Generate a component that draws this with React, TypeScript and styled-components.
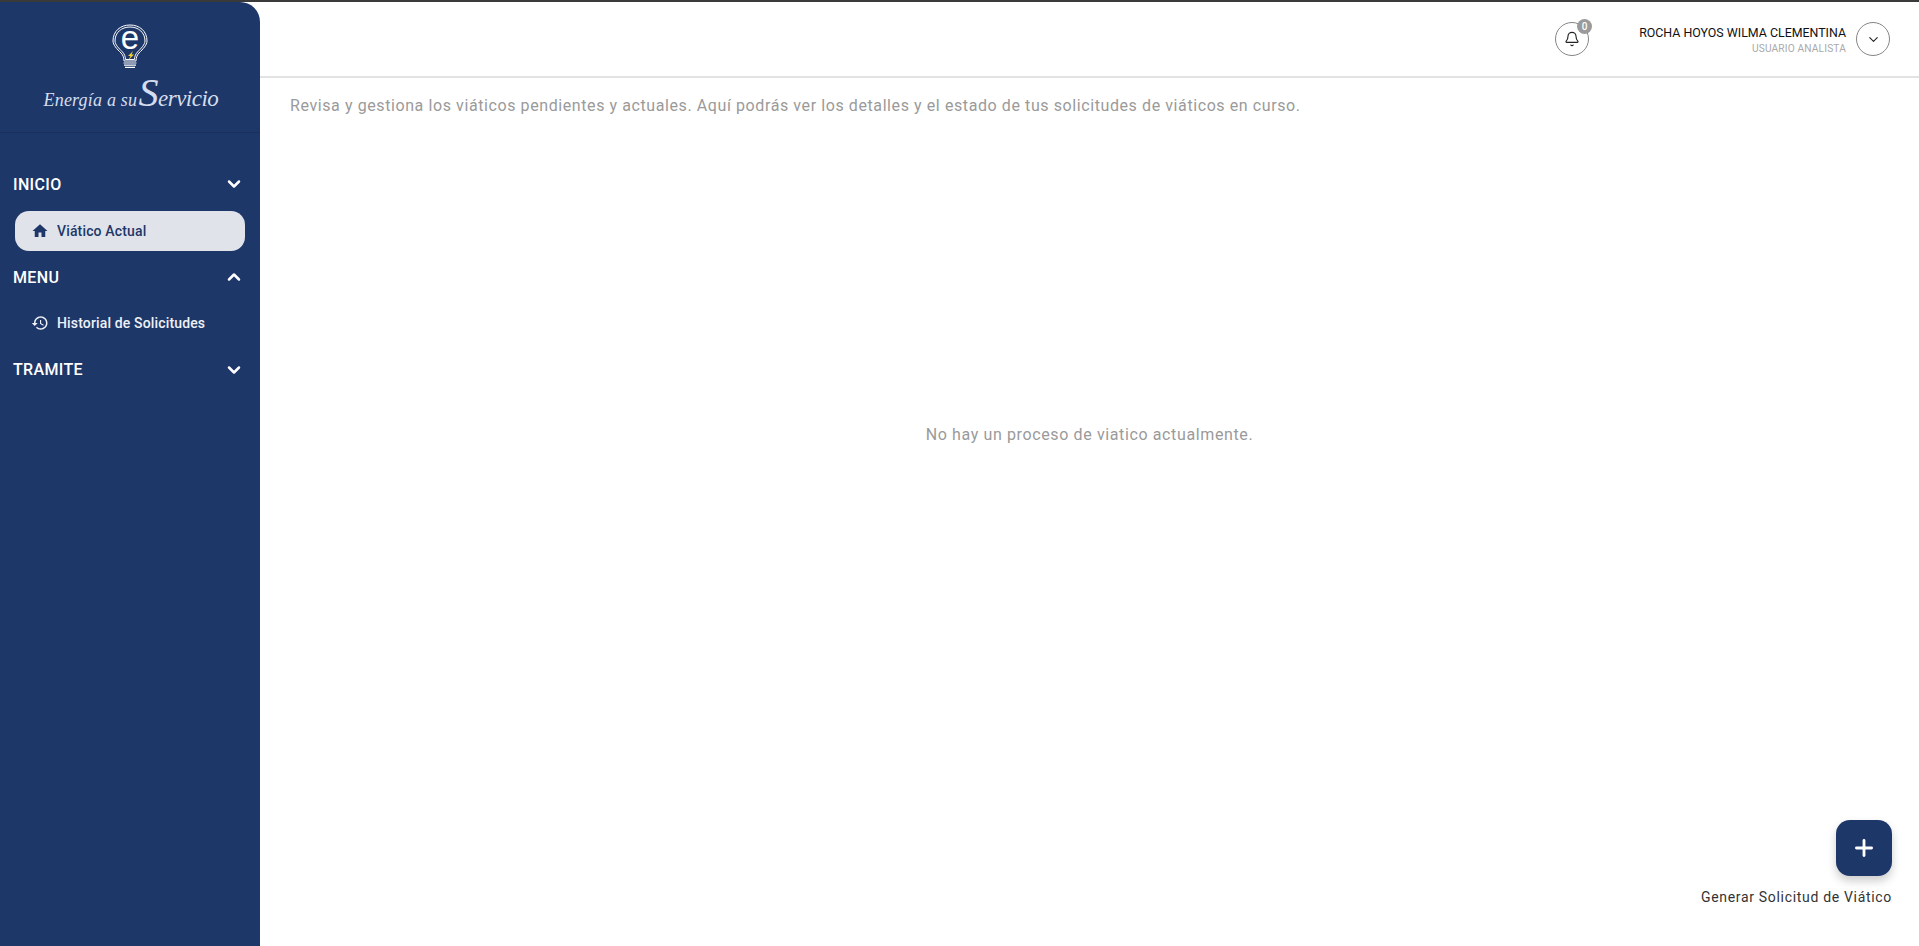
import React from 'react'
import styled, { createGlobalStyle } from 'styled-components'
import { Bell, ChevronDown, ChevronUp, Plus } from 'lucide-react'

const GlobalStyle = createGlobalStyle`
  html, body {
    margin: 0;
    height: 100%;
    background: #fff;
    font-family: Roboto, "Liberation Sans", sans-serif;
  }
  #root {
    height: 100%;
  }
`

const Page = styled.div`
  height: 100vh;
  display: flex;
  flex-direction: column;
  overflow: hidden;
`

const TopLine = styled.div`
  height: 2px;
  flex: none;
  background: #3a3a3a;
`

const Body = styled.div`
  flex: 1;
  min-height: 0;
  display: flex;
`

const Sidebar = styled.aside`
  width: 260px;
  flex: none;
  background: #1e3769;
  border-top-right-radius: 20px;
  color: #fff;
`

const Brand = styled.div`
  height: 131px;
  box-sizing: border-box;
  padding-top: 12px;
  display: flex;
  flex-direction: column;
  align-items: center;
  border-bottom: 1px solid #1a3160;
`

const Tagline = styled.div`
  display: flex;
  align-items: baseline;
  margin-top: 1px;
  font-family: "Liberation Serif", serif;
  font-style: italic;
  color: #d5deee;
  white-space: nowrap;
  line-height: 44px;
`

const TaglineSmall = styled.span`
  font-size: 18px;
  width: 95px;
  letter-spacing: 0.2px;
`

const TaglineBig = styled.span`
  display: inline-block;
  font-size: 23px;
  width: 78px;
  letter-spacing: -0.5px;

  &::first-letter {
    font-size: 40px;
  }
`

const Nav = styled.nav`
  padding: 28.300px 16px 0 13px;
  display: flex;
  flex-direction: column;
`

const Section = styled.div`
  height: 46.300px;
  display: flex;
  align-items: center;
  justify-content: space-between;
  font-size: 16px;
  font-weight: 500;
  letter-spacing: 0.35px;
`

const SectionToggle = styled.span`
  display: flex;
`

const Item = styled.div<{ $active?: boolean }>`
  height: 46.300px;
  display: flex;
  align-items: center;
  position: relative;
  z-index: 0;
  margin: 0 -1px 0 2px;
  padding-left: 16px;
  gap: 8px;
  font-size: 14px;
  font-weight: 500;
  letter-spacing: 0.15px;
  color: ${(p) => (p.$active ? '#1e3769' : '#eef1f6')};

  &::before {
    content: '';
    display: ${(p) => (p.$active ? 'block' : 'none')};
    position: absolute;
    z-index: -1;
    left: 0;
    right: 0;
    top: 3px;
    bottom: 3px;
    border-radius: 14px;
    background: #e0e4ea;
  }
`

const ItemIcon = styled.svg`
  width: 18px;
  height: 18px;
  flex: none;
  fill: currentColor;
`

const Main = styled.main`
  flex: 1;
  min-width: 0;
  display: flex;
  flex-direction: column;
`

const Header = styled.header`
  height: 76px;
  flex: none;
  box-sizing: border-box;
  border-bottom: 2px solid #e2e2e2;
  padding-right: 29px;
  display: flex;
  align-items: center;
  justify-content: flex-end;
`

const RoundButton = styled.div`
  position: relative;
  width: 34px;
  height: 34px;
  box-sizing: border-box;
  border: 1px solid #858585;
  border-radius: 50%;
  display: flex;
  align-items: center;
  justify-content: center;
  color: #222;
`

const Badge = styled.span`
  position: absolute;
  top: -4px;
  right: -4px;
  width: 15px;
  height: 15px;
  border-radius: 50%;
  background: #9a9a9a;
  color: #fff;
  font-size: 10px;
  font-weight: 500;
  line-height: 15px;
  text-align: center;
`

const UserBox = styled.div`
  margin-left: 50px;
  margin-right: 10px;
  padding-top: 2px;
  text-align: right;
`

const UserName = styled.div`
  font-size: 12.400px;
  line-height: 16px;
  color: #111;
`

const UserRole = styled.div`
  font-size: 10.200px;
  line-height: 15px;
  letter-spacing: 0.15px;
  color: #aaa;
`

const Intro = styled.p`
  margin: 17px 0 0 30px;
  font-size: 16px;
  line-height: 22px;
  letter-spacing: 0.59px;
  color: #9a9a9a;
`

const Empty = styled.div`
  margin-top: 307px;
  text-align: center;
  font-size: 16px;
  line-height: 22px;
  letter-spacing: 0.62px;
  color: #9a9a9a;
`

const Actions = styled.div`
  margin-top: auto;
  padding: 0 27px 39px 0;
  display: flex;
  flex-direction: column;
  align-items: flex-end;
  gap: 11px;
`

const Fab = styled.div`
  width: 56px;
  height: 56px;
  border-radius: 14px;
  background: #1e3769;
  color: #fff;
  display: flex;
  align-items: center;
  justify-content: center;
  box-shadow: 0 5px 10px rgba(0, 0, 0, 0.2);
`

const FabLabel = styled.div`
  font-size: 14px;
  line-height: 20px;
  letter-spacing: 0.68px;
  color: #333;
`

function BulbLogo() {
  return (
    <svg width="36" height="56" viewBox="0 -10 36 56" fill="none">
      <path
        d="M9 29C5 25 1 21 1 17C1 7 8.500 1 18 1C27.500 1 35 7 35 17C35 21 31 25 27 29C25 31 24 34 24 37H12C12 34 11 31 9 29Z"
        stroke="#fff"
        strokeWidth="1"
      />
      <path
        d="M10.500 28C7 24.500 3 20.500 3 17C3 8.500 9.500 3 18 3C26.500 3 33 8.500 33 17C33 20.500 29 24.500 25.500 28C23.500 30 22.500 33 22.500 35.500H13.500C13.500 33 12.500 30 10.500 28Z"
        stroke="#fff"
        strokeWidth="1"
      />
      <text x="18" y="25" textAnchor="middle" fontFamily="Liberation Sans, sans-serif" fontSize="33" fill="#fff">
        e
      </text>
      <path d="M21 27L16 32H18.500L16.500 36L22 30.500H19.500Z" fill="#f2d32e" />
      <path d="M11.500 39H24.500M12 41.200H24M13 43.400H23" stroke="#fff" strokeWidth="1.200" />
    </svg>
  )
}

export default function App() {
  return (
    <Page>
      <GlobalStyle />
      <TopLine />
      <Body>
        <Sidebar>
          <Brand>
            <BulbLogo />
            <Tagline>
              <TaglineSmall>Energía a su</TaglineSmall>
              <TaglineBig>Servicio</TaglineBig>
            </Tagline>
          </Brand>
          <Nav>
            <Section>
              INICIO
              <SectionToggle><ChevronDown size={20} strokeWidth={3} /></SectionToggle>
            </Section>
            <Item $active>
              <ItemIcon viewBox="0 0 24 24">
                <path d="M10 20v-6h4v6h5v-8h3L12 3 2 12h3v8z" />
              </ItemIcon>
              Viático Actual
            </Item>
            <Section>
              MENU
              <SectionToggle><ChevronUp size={20} strokeWidth={3} /></SectionToggle>
            </Section>
            <Item>
              <ItemIcon viewBox="0 0 24 24">
                <path d="M13 3c-4.970 0-9 4.030-9 9H1l3.890 3.890.07.14L9 12H6c0-3.870 3.130-7 7-7s7 3.130 7 7-3.130 7-7 7c-1.930 0-3.680-.79-4.940-2.060l-1.420 1.420C8.270 19.990 10.510 21 13 21c4.970 0 9-4.030 9-9s-4.030-9-9-9zm-1 5v5l4.280 2.540.72-1.210-3.500-2.080V8H12z" />
              </ItemIcon>
              Historial de Solicitudes
            </Item>
            <Section>
              TRAMITE
              <SectionToggle><ChevronDown size={20} strokeWidth={3} /></SectionToggle>
            </Section>
          </Nav>
        </Sidebar>
        <Main>
          <Header>
            <RoundButton>
              <Bell size={16} strokeWidth={1.7} />
              <Badge>0</Badge>
            </RoundButton>
            <UserBox>
              <UserName>ROCHA HOYOS WILMA CLEMENTINA</UserName>
              <UserRole>USUARIO ANALISTA</UserRole>
            </UserBox>
            <RoundButton>
              <ChevronDown size={15} strokeWidth={1.8} />
            </RoundButton>
          </Header>
          <Intro>
            Revisa y gestiona los viáticos pendientes y actuales. Aquí podrás ver los detalles y el estado de tus solicitudes de viáticos en curso.
          </Intro>
          <Empty>No hay un proceso de viatico actualmente.</Empty>
          <Actions>
            <Fab>
              <Plus size={26} strokeWidth={2.6} />
            </Fab>
            <FabLabel>Generar Solicitud de Viático</FabLabel>
          </Actions>
        </Main>
      </Body>
    </Page>
  )
}
